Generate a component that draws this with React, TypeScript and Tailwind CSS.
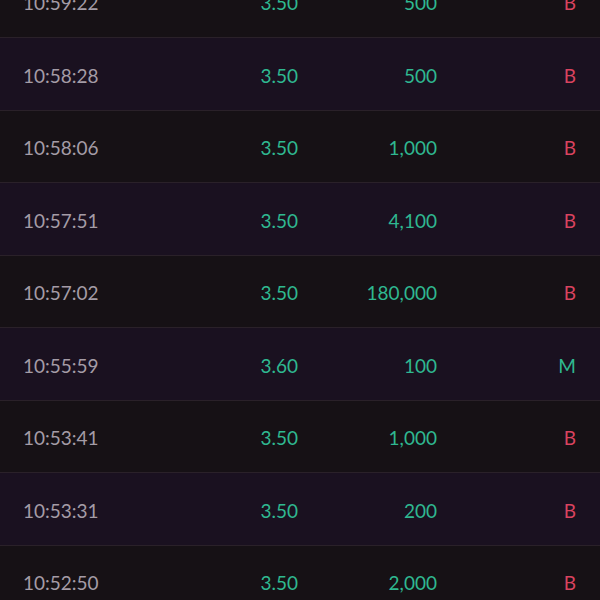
const TRADES = [
  { time: '10:59:22', price: '3.50', volume: '500', side: 'B' },
  { time: '10:58:28', price: '3.50', volume: '500', side: 'B' },
  { time: '10:58:06', price: '3.50', volume: '1,000', side: 'B' },
  { time: '10:57:51', price: '3.50', volume: '4,100', side: 'B' },
  { time: '10:57:02', price: '3.50', volume: '180,000', side: 'B' },
  { time: '10:55:59', price: '3.60', volume: '100', side: 'M' },
  { time: '10:53:41', price: '3.50', volume: '1,000', side: 'B' },
  { time: '10:53:31', price: '3.50', volume: '200', side: 'B' },
  { time: '10:52:50', price: '3.50', volume: '2,000', side: 'B' },
]

export default function App() {
  return (
    <div
      className="w-[600px] h-[600px] overflow-hidden bg-[#161115] text-[19px]"
      style={{ fontFamily: 'Lato, "Noto Sans", sans-serif' }}
    >
      <div className="-mt-[34.5px]">
        {TRADES.map((t, i) => (
          <div
            key={t.time}
            className={`flex items-center h-[72.5px] pt-[4px] pl-[23px] pr-[24px] border-b border-[#2a2129] ${
              i % 2 === 1 ? 'bg-[#1a1120]' : 'bg-[#161115]'
            }`}
          >
            {/* Time */}
            <div className="w-[175px] text-[#a49ca6]">{t.time}</div>
            {/* Price */}
            <div className="w-[100px] text-right text-[#2fb890]">{t.price}</div>
            {/* Volume */}
            <div className="w-[139px] text-right text-[#2fb890]">{t.volume}</div>
            {/* Side */}
            <div className={`flex-1 text-right ${t.side === 'M' ? 'text-[#2fb890]' : 'text-[#d9435f]'}`}>
              {t.side}
            </div>
          </div>
        ))}
      </div>
    </div>
  )
}
